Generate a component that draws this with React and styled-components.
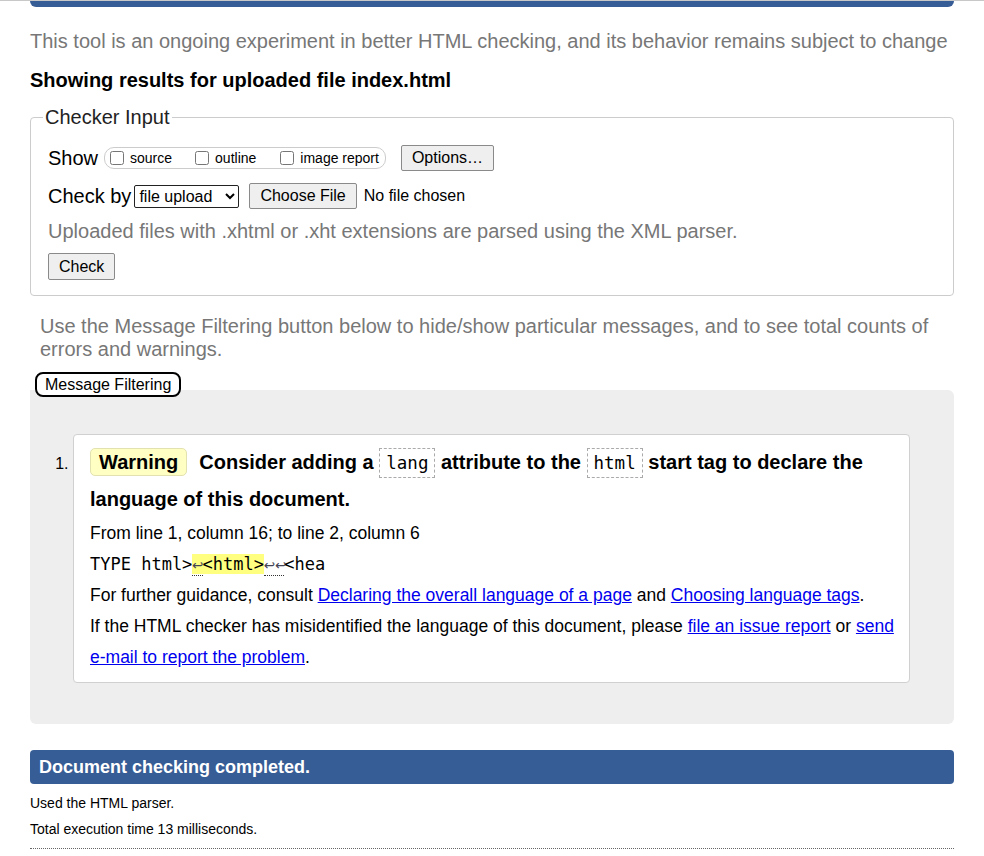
import React from "react";
import styled, { createGlobalStyle } from "styled-components";

const colors = {
  blue: "#375d96",
  grey: "#777777",
  line: "#cccccc",
  link: "#0000ee",
  panel: "#eeeeee",
};

const GlobalStyle = createGlobalStyle`
  html, body {
    margin: 0;
    padding: 0;
    background: #fff;
  }
  body {
    font-family: "Liberation Sans", Arial, sans-serif;
    color: #000;
    border-top: 1px solid #c8c8c8;
  }
`;

const Page = styled.div`
  padding: 0 30px 10px;
  width: 924px;
`;

const TopBar = styled.div`
  height: 6px;
  background: ${colors.blue};
  border-radius: 0 0 6px 6px;
`;

const Intro = styled.p`
  margin: 22px 0 0;
  font-size: 20px;
  line-height: 24px;
  color: ${colors.grey};
`;

const Heading = styled.h2`
  margin: 15px 0 0;
  font-size: 20px;
  line-height: 24px;
  font-weight: bold;
`;

const Fieldset = styled.fieldset`
  margin: 13px 0 0;
  padding: 16px 16px 15px 17px;
  border: 1px solid ${colors.line};
  border-radius: 4px;
`;

const Legend = styled.legend`
  margin-left: -5px;
  padding: 0 2px;
  font-size: 20px;
  line-height: 24px;
  color: #222;
`;

const Row = styled.div`
  display: flex;
  align-items: center;
  gap: ${(p) => p.$gap || 6}px;
  margin-top: ${(p) => p.$top || 0}px;
  font-size: 20px;
`;

const Pill = styled.span`
  display: inline-flex;
  align-items: center;
  height: 20px;
  padding: 0 6px 0 2px;
  border: 1px solid ${colors.line};
  border-radius: 10px;
  margin-right: 8px;
`;

const CheckLabel = styled.label`
  display: inline-flex;
  align-items: center;
  font-size: 14px;
  margin-right: ${(p) => p.$gap || 0}px;
  input {
    margin: 0 6px 0 3px;
    width: 14px;
    height: 14px;
  }
`;

const Button = styled.button`
  font-family: "Liberation Sans", Arial, sans-serif;
  font-size: 16px;
  height: ${(p) => p.$h || 25}px;
  padding: 0 ${(p) => p.$px || 9}px;
  margin-left: ${(p) => p.$ml || 0}px;
  background: #efefef;
  border: 1px solid #8a8a8a;
  border-radius: 2px;
  color: #000;
`;

const Select = styled.select`
  font-family: "Liberation Sans", Arial, sans-serif;
  font-size: 16px;
  height: 23px;
  width: 105px;
  border: 1px solid #222;
  border-radius: 2px;
  background: #fff;
  color: #000;
  margin-right: 4px;
`;

const FileText = styled.span`
  font-size: 16px;
  margin-left: 4px;
`;

const Hint = styled.p`
  margin: 10px 0 0;
  font-size: 20px;
  line-height: 24px;
  color: ${colors.grey};
`;

const FilterNote = styled.p`
  margin: 19px 0 0;
  padding: 0 10px;
  font-size: 20px;
  line-height: 23px;
  color: ${colors.grey};
`;

const FilterButton = styled.button`
  display: block;
  position: relative;
  z-index: 1;
  margin: 11px 0 -7px 5px;
  height: 25px;
  padding: 0 8px;
  font-family: "Liberation Sans", Arial, sans-serif;
  font-size: 16px;
  background: #fff;
  color: #000;
  border: 2px solid #000;
  border-radius: 8px;
`;

const Results = styled.div`
  background: ${colors.panel};
  border-radius: 0 6px 6px 6px;
  padding: 44px 44px 41px 43px;
`;

const List = styled.ol`
  margin: 0;
  padding: 0;
  list-style: decimal outside;
`;

const Item = styled.li`
  background: #fff;
  border: 1px solid #d0d0d0;
  border-radius: 4px;
  padding: 9px 12px 9px 16px;
  font-size: 16px;
  &::marker {
    font-size: 16px;
  }
`;

const Message = styled.p`
  margin: 0;
  font-size: 20px;
  line-height: 37px;
  font-weight: bold;
`;

const Badge = styled.strong`
  display: inline-block;
  line-height: 26px;
  padding: 0 8px;
  margin-right: 12px;
  background: #ffffc4;
  border: 1px solid #e2e2b0;
  border-radius: 5px;
`;

const Code = styled.code`
  display: inline-block;
  font-family: "DejaVu Sans Mono", monospace;
  font-weight: normal;
  font-size: 17.5px;
  line-height: 28px;
  padding: 0 6px;
  border: 1px dashed #aaa;
`;

const Line = styled.p`
  margin: 0;
  font-size: 17.5px;
  line-height: 31px;
`;

const Extract = styled.p`
  margin: 0;
  font-family: "DejaVu Sans Mono", monospace;
  font-size: 17px;
  line-height: 31px;
`;

const Highlight = styled.b`
  font-weight: normal;
  background: #ffff80;
`;

const Lf = styled.span`
  display: inline-block;
  width: ${(p) => (p.$n || 1) * 10.2}px;
  line-height: 20px;
  font-family: "DejaVu Sans", sans-serif;
  font-size: 13.5px;
  color: #445;
  border-bottom: 1px dotted #333;
  white-space: nowrap;
`;

const Link = styled.a`
  color: ${colors.link};
  text-decoration: underline;
`;

const Done = styled.div`
  margin-top: 26px;
  height: 34px;
  display: flex;
  align-items: center;
  padding: 0 9px;
  background: ${colors.blue};
  border-radius: 4px;
  color: #fff;
  font-size: 18px;
  font-weight: bold;
`;

const Stats = styled.div`
  margin-top: 6px;
  font-size: 14px;
  line-height: 26px;
  padding-bottom: 6px;
  border-bottom: 1px dotted #666;
  p {
    margin: 0;
  }
`;

export default function App() {
  return (
    <Page>
      <GlobalStyle />
      <TopBar />
      <Intro>
        This tool is an ongoing experiment in better HTML checking, and its behavior remains subject to change
      </Intro>
      <Heading>Showing results for uploaded file index.html</Heading>

      <Fieldset>
        <Legend>Checker Input</Legend>
        <Row>
          <span>Show</span>
          <Pill>
            <CheckLabel $gap={20}>
              <input type="checkbox" />
              source
            </CheckLabel>
            <CheckLabel $gap={21}>
              <input type="checkbox" />
              outline
            </CheckLabel>
            <CheckLabel>
              <input type="checkbox" />
              image report
            </CheckLabel>
          </Pill>
          <Button $h={26} $px={10} $ml={1}>Options…</Button>
        </Row>
        <Row $top={12} $gap={3}>
          <span>Check by</span>
          <Select defaultValue="file">
            <option value="file">file upload</option>
            <option value="address">address</option>
            <option value="text">text input</option>
          </Select>
          <Button $h={26} $px={10} $ml={3}>Choose File</Button>
          <FileText>No file chosen</FileText>
        </Row>
        <Hint>Uploaded files with .xhtml or .xht extensions are parsed using the XML parser.</Hint>
        <Row $top={10}>
          <Button $h={27} $px={10}>Check</Button>
        </Row>
      </Fieldset>

      <FilterNote>
        Use the Message Filtering button below to hide/show particular messages, and to see total counts of errors and warnings.
      </FilterNote>
      <FilterButton>Message Filtering</FilterButton>

      <Results>
        <List>
          <Item>
            <Message>
              <Badge>Warning</Badge>
              Consider adding a <Code>lang</Code> attribute to the <Code>html</Code> start tag to declare the
              language of this document.
            </Message>
            <Line>From line 1, column 16; to line 2, column 6</Line>
            <Extract>
              TYPE html&gt;
              <Highlight>
                <Lf>↩</Lf>&lt;html&gt;
              </Highlight>
              <Lf $n={2}>↩↩</Lf>&lt;hea
            </Extract>
            <Line>
              For further guidance, consult <Link href="#">Declaring the overall language of a page</Link> and{" "}
              <Link href="#">Choosing language tags</Link>.
            </Line>
            <Line>
              If the HTML checker has misidentified the language of this document, please{" "}
              <Link href="#">file an issue report</Link> or <Link href="#">send e-mail to report the problem</Link>.
            </Line>
          </Item>
        </List>
      </Results>

      <Done>Document checking completed.</Done>
      <Stats>
        <p>Used the HTML parser.</p>
        <p>Total execution time 13 milliseconds.</p>
      </Stats>
    </Page>
  );
}
